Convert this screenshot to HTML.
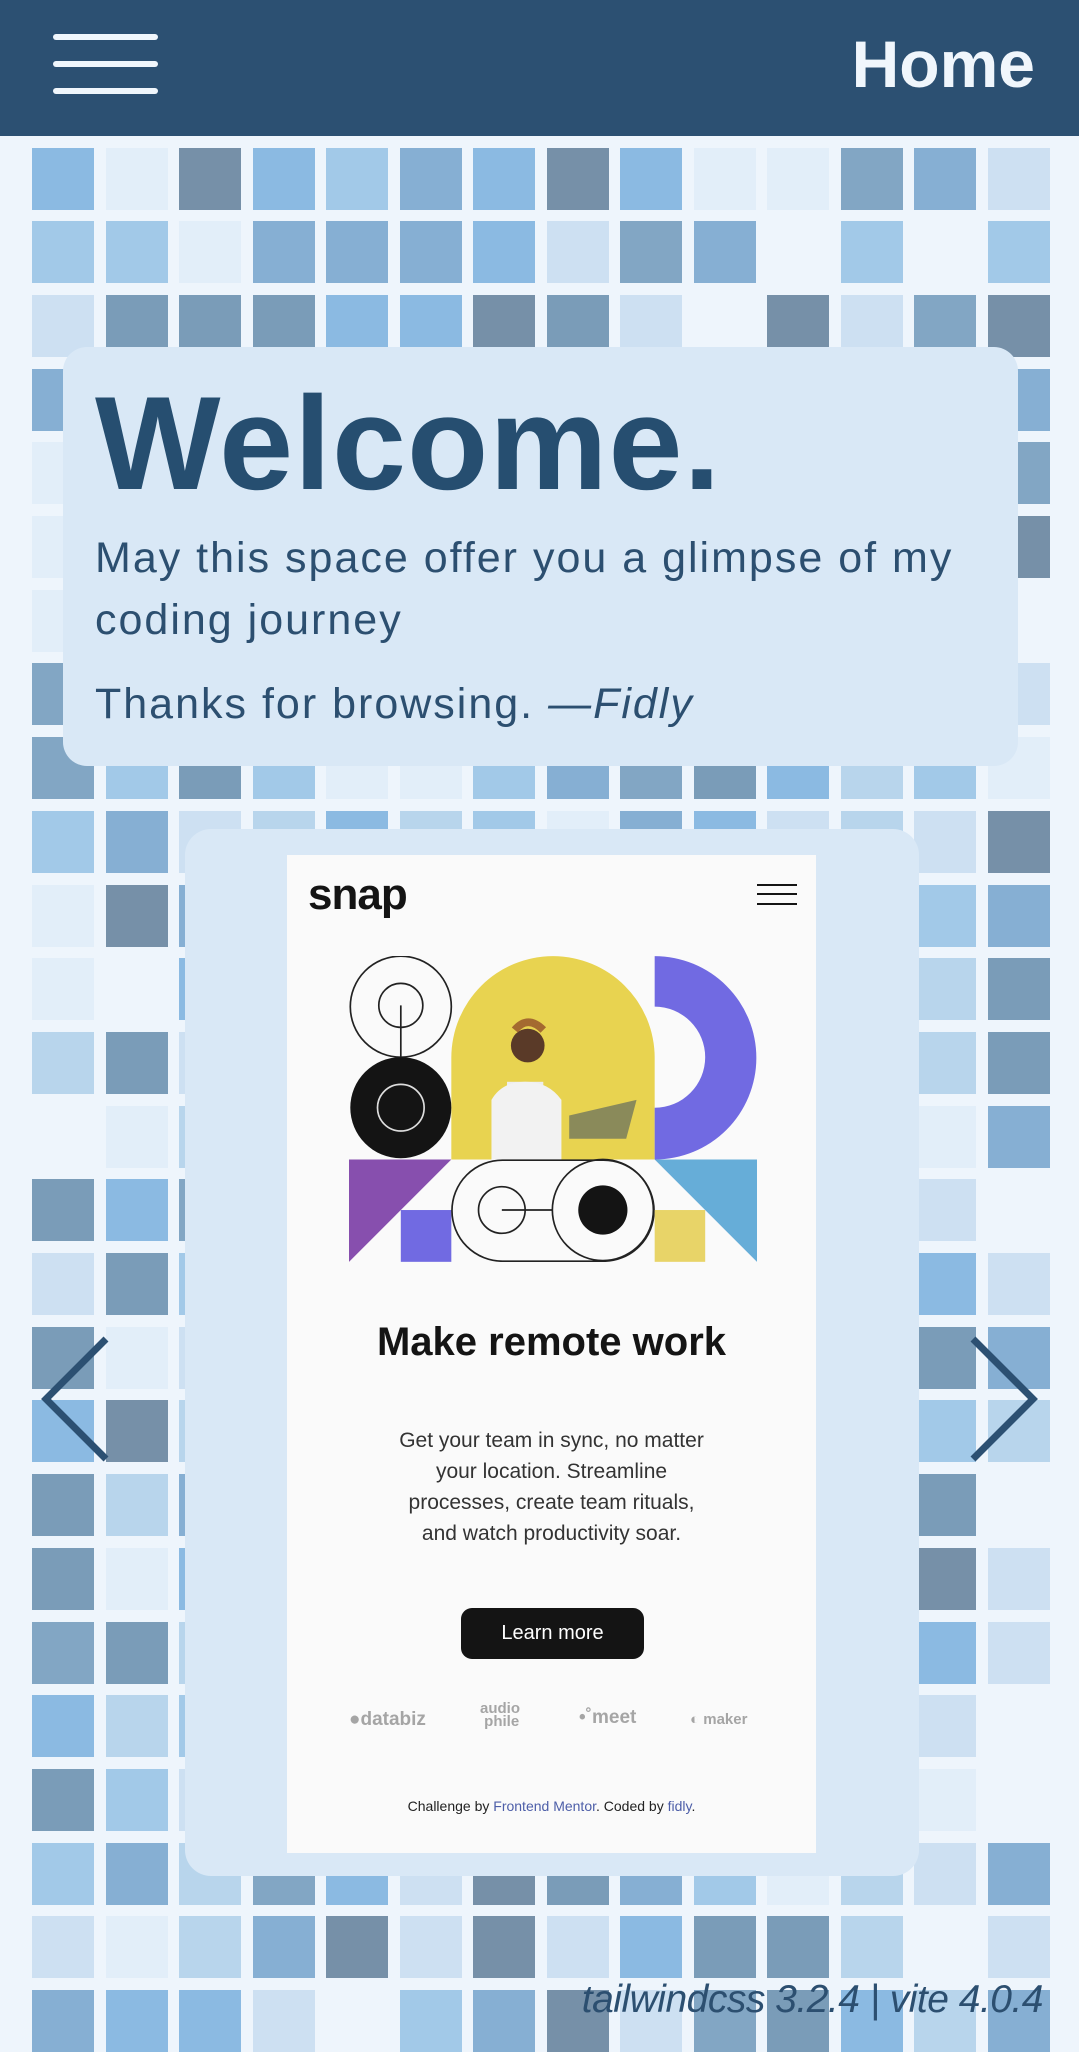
<!DOCTYPE html>
<html><head><meta charset="utf-8"><style>
html,body{margin:0;padding:0}
body{width:1079px;height:2029px;position:relative;overflow:hidden;background:#eef5fc;font-family:"Liberation Sans",sans-serif}
.t{position:absolute;width:62px;height:62px}
.hdr{position:absolute;left:0;top:0;width:1079px;height:136px;background:#2c5072}
.bar{position:absolute;left:53px;width:105px;height:6px;border-radius:3px;background:#f0f6fc}
.home{position:absolute;right:44px;top:26px;font-size:66px;font-weight:bold;color:#f0f6fc;line-height:76px}
.card1{position:absolute;left:63px;top:347px;width:955px;height:419px;background:#d9e8f6;border-radius:24px}
.card2{position:absolute;left:185px;top:829px;width:734px;height:1047px;background:#d9e8f6;border-radius:26px}
.shot{position:absolute;left:287px;top:855px;width:529px;height:998px;background:#fafafa}
.txt{position:absolute;color:#2c4f70;white-space:nowrap}
</style></head><body>
<div id="grid"></div>
<div class="hdr">
<div class="bar" style="top:34px"></div><div class="bar" style="top:61px"></div><div class="bar" style="top:88px"></div>
<div class="home">Home</div>
</div>
<div class="card1">
<div class="txt" style="left:32px;top:22px;font-size:133px;font-weight:bold;color:#264e70;line-height:150px;letter-spacing:1px">Welcome.</div>
<div class="txt" style="left:32px;top:180px;font-size:43px;line-height:62px;white-space:normal;width:900px;letter-spacing:2px">May this space offer you a glimpse of my coding journey</div>
<div class="txt" style="left:32px;top:326px;font-size:43px;line-height:62px;letter-spacing:2px">Thanks for browsing. <i>—Fidly</i></div>
</div>
<div class="card2"></div>
<div class="shot">
<div style="position:absolute;left:21px;top:15px;font-size:44px;font-weight:bold;color:#141414;letter-spacing:-1px">snap</div>
<div style="position:absolute;left:470px;top:29px;width:40px;height:2px;background:#141414"></div>
<div style="position:absolute;left:470px;top:38px;width:40px;height:2px;background:#141414"></div>
<div style="position:absolute;left:470px;top:48px;width:40px;height:2px;background:#141414"></div>
<svg style="position:absolute;left:62px;top:101px" width="408" height="306" viewBox="270 739 315 236">
<path d="M349,896 V817.5 A78.5,78.5 0 0 1 506,817.5 V896 Z" fill="#e8d350"/>
<rect x="392" y="836" width="28" height="60" fill="#eee"/>
<circle cx="408" cy="808" r="13" fill="#5a3a28"/>
<path d="M398,796 q10,-12 22,0" stroke="#a46a30" stroke-width="6" fill="none"/>
<path d="M380,896 V850 q8,-14 26,-14 q18,0 28,14 V896 Z" fill="#f2f2f2"/>
<path d="M440,862 L492,850 L484,880 L440,880 Z" fill="#8a8a5a"/>
<path d="M506,739 A78.5,78.5 0 0 1 506,896 V856 A39,39 0 0 0 506,778 Z" fill="#716ae2"/>
<circle cx="310" cy="778" r="39" fill="none" stroke="#222" stroke-width="1.3"/>
<circle cx="310" cy="777" r="17" fill="none" stroke="#222" stroke-width="1.3"/>
<line x1="310" y1="777" x2="310" y2="817" stroke="#222" stroke-width="1.3"/>
<circle cx="310" cy="856" r="39" fill="#141414"/>
<circle cx="310" cy="856" r="18" fill="none" stroke="#ddd" stroke-width="1.3"/>
<path d="M270,896 H349 L270,975 Z" fill="#874fae"/>
<rect x="310" y="935" width="39" height="40" fill="#716ae2"/>
<rect x="349.5" y="896.5" width="156" height="78" rx="39" fill="none" stroke="#222" stroke-width="1.3"/>
<circle cx="388" cy="935" r="18" fill="none" stroke="#222" stroke-width="1.3"/>
<line x1="388" y1="935" x2="427" y2="935" stroke="#222" stroke-width="1.3"/>
<circle cx="466" cy="935" r="39" fill="none" stroke="#222" stroke-width="1.3"/>
<circle cx="466" cy="935" r="19" fill="#141414"/>
<rect x="506" y="935" width="39" height="40" fill="#e8d468"/>
<path d="M506,896 H585 V975 Z" fill="#66add8"/>
</svg>
<div style="position:absolute;left:0;width:529px;top:465px;text-align:center;font-size:40px;font-weight:bold;color:#141414">Make remote work</div>
<div style="position:absolute;left:0;width:529px;top:570px;text-align:center;font-size:21px;line-height:31px;color:#333">Get your team in sync, no matter<br>your location. Streamline<br>processes, create team rituals,<br>and watch productivity soar.</div>
<div style="position:absolute;left:174px;top:753px;width:183px;height:51px;border-radius:11px;background:#141414;color:#fff;font-size:20px;line-height:51px;text-align:center">Learn more</div>
<div style="position:absolute;left:62px;top:854px;font-size:19px;font-weight:bold;color:#a5a5a5">●databiz</div>
<div style="position:absolute;left:193px;top:847px;font-size:15px;font-weight:bold;color:#a5a5a5;line-height:13px">audio<br>&nbsp;phile</div>
<div style="position:absolute;left:292px;top:852px;font-size:19px;font-weight:bold;color:#a5a5a5">•˚meet</div>
<div style="position:absolute;left:403px;top:856px;font-size:15px;font-weight:bold;color:#a5a5a5">◐ maker</div>
<div style="position:absolute;left:0;width:529px;top:943px;text-align:center;font-size:14px;color:#222">Challenge by <span style="color:#4d5ea8">Frontend Mentor</span>. Coded by <span style="color:#4d5ea8">fidly</span>.</div>
</div>
<svg style="position:absolute;left:38px;top:1335px" width="76" height="128"><path d="M68,4 L8,64 L68,124" fill="none" stroke="#2c5072" stroke-width="7"/></svg>
<svg style="position:absolute;left:965px;top:1335px" width="76" height="128"><path d="M8,4 L68,64 L8,124" fill="none" stroke="#2c5072" stroke-width="7"/></svg>
<div style="position:absolute;right:36px;top:1978px;font-size:39px;font-style:italic;color:#2c4f70;letter-spacing:-0.5px;white-space:nowrap">tailwindcss 3.2.4 | vite 4.0.4</div>
<script>
var P={A:"#8bbae2",B:"#e2eef9",C:"#7690a8",D:"#a2c9e8",E:"#86afd3",F:"#cde0f2",G:"#82a6c4",H:"#b8d5ec",I:"#7a9cb8",_:""};
var R=["ABCADEACABBGEF","DDBEEEAFGE_D_D","FIIIAACIF_CFGC","EEGAFDHBIEAFDE","BFHAEDBCFIAHDG","BFDAICEHBFAGEC","BHAFDIEBHCFAD_","GDFAHCIEBDGHEF","GDIDBBDEGIAHDB","DEFHAHDBEAFHFC","BCEFAGDIHBEFDE","B_AHDCFEGBIAHI","HIFDEBGCAHDFHI","_BHEDGAFBIDCBE","IAGBFHCEDAFHF_","FIDHEBIAGFDCAF","IBFAGDHCEIBFIE","ACHDIBEFAGHDDH","IHEBAFCGHDIEI_","IBAFDHGEBCFACF","GIHCFEDABGIHAF","AHDEBIFGCHADF_","IDFAHEGBDCFHB_","DEHGAFCIEDBHFE","FBHECFCFAIIH_F","EAAF_DECFGIAHE"];
var h="";for(var j=0;j<26;j++)for(var i=0;i<14;i++){var c=P[R[j][i]];if(c)h+='<div class="t" style="left:'+(32+i*73.5)+'px;top:'+(147.5+j*73.7)+'px;background:'+c+'"></div>';}
document.getElementById("grid").innerHTML=h;
</script>
</body></html>
